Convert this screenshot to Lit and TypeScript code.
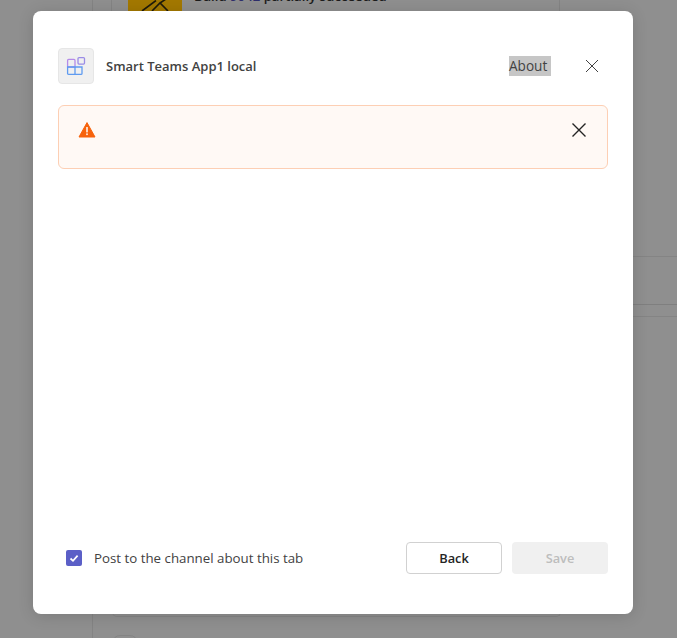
import { LitElement, css, html } from 'lit';
import { customElement } from 'lit/decorators.js';

@customElement('app-root')
export class AppRoot extends LitElement {
  static styles = css`
    :host {
      display: block;
      position: relative;
      width: 677px;
      height: 638px;
      overflow: hidden;
      background: #8f8f8f;
      font-family: 'Open Sans', 'Noto Sans', sans-serif;
      color: #242424;
    }

    /* dimmed page behind the dialog */
    .page {
      display: flex;
      height: 100%;
    }
    .rail {
      width: 92px;
      border-right: 1px solid #848484;
    }
    .feed {
      flex: 1;
      display: flex;
      flex-direction: column;
    }
    .feed > * {
      flex: none;
    }
    .top {
      height: 257px;
      border-bottom: 1px solid #848484;
      box-sizing: border-box;
    }
    .post {
      width: 449px;
      height: 60px;
      margin-left: 18px;
      border-left: 1px solid #848484;
      border-right: 1px solid #848484;
      display: flex;
      gap: 12px;
      padding-left: 16px;
      box-sizing: border-box;
    }
    .thumb {
      width: 54px;
      height: 40px;
      background: #a37800;
    }
    .thumb svg {
      display: block;
    }
    .post-text {
      margin-top: -14px;
      font-size: 13.2px;
      line-height: 20px;
      color: #1c1c1c;
      font-weight: 600;
      white-space: nowrap;
    }
    .post-text span {
      color: #2f2f6b;
    }
    .band {
      height: 48px;
      border-bottom: 1px solid #7f7f7f;
      box-sizing: border-box;
    }
    .gap {
      height: 12px;
      border-bottom: 1px solid #848484;
      box-sizing: border-box;
    }
    .card {
      width: 449px;
      height: 300px;
      margin-left: 19px;
      border: 1px solid #848484;
      border-top: none;
      border-radius: 0 0 5px 5px;
      box-sizing: border-box;
    }
    .avatar {
      width: 26px;
      height: 26px;
      margin: 18px 0 0 19px;
      border: 1px solid #848484;
      border-radius: 8px;
      box-sizing: border-box;
    }

    /* dialog */
    .dialog {
      position: absolute;
      left: 33px;
      top: 11px;
      width: 600px;
      height: 603px;
      box-sizing: border-box;
      padding: 37px 25px 40px;
      background: #fff;
      border-radius: 8px;
      box-shadow: 0 2px 16px rgba(0, 0, 0, 0.14);
      display: flex;
      flex-direction: column;
    }
    .header {
      display: flex;
      align-items: center;
      height: 36px;
    }
    .app-icon {
      width: 36px;
      height: 36px;
      box-sizing: border-box;
      border: 1px solid #e6e6e6;
      border-radius: 4px;
      background: #f0f0f0;
      display: flex;
      align-items: center;
      justify-content: center;
    }
    .app-name {
      margin-left: 12px;
      flex: 1;
      font-size: 13px;
      font-weight: 600;
      color: #424242;
    }
    .about {
      display: block;
      width: 42px;
      height: 20px;
      line-height: 20px;
      background: #c6c6c6;
      color: #424242;
      font-size: 13.6px;
      white-space: nowrap;
    }
    .close {
      display: block;
      margin-left: 34px;
      margin-right: 9px;
    }
    .alert {
      margin-top: 21px;
      height: 64px;
      box-sizing: border-box;
      border: 1px solid #fdcfb4;
      border-radius: 6px;
      background: #fff9f5;
      display: flex;
      justify-content: space-between;
      padding: 15px 21px 0 19px;
    }
    .alert svg {
      display: block;
    }
    .alert .dismiss {
      margin-top: 2px;
    }
    .spacer {
      flex: 1;
    }
    .footer {
      display: flex;
      align-items: center;
      height: 32px;
    }
    .check {
      width: 16px;
      height: 16px;
      margin-left: 8px;
      border-radius: 2px;
      background: #5b5fc7;
      display: flex;
      align-items: center;
      justify-content: center;
    }
    .check-label {
      margin-left: 12px;
      flex: 1;
      font-size: 13.3px;
      color: #424242;
    }
    .btn {
      width: 96px;
      height: 32px;
      box-sizing: border-box;
      border-radius: 4px;
      font: 600 12.8px 'Open Sans', 'Noto Sans', sans-serif;
      padding: 0;
    }
    .back {
      background: #fff;
      border: 1px solid #d1d1d1;
      color: #242424;
      margin-right: 10px;
    }
    .save {
      background: #f0f0f0;
      border: none;
      color: #bdbdbd;
    }
  `;

  render() {
    return html`
      <div class="page">
        <div class="rail"></div>
        <div class="feed">
          <div class="top">
            <div class="post">
              <div class="thumb">
                <svg width="54" height="11" viewBox="0 0 54 11" fill="none" stroke="#1f1a0a" stroke-width="1.6">
                  <path d="M14 11 L28 0.5 M24 11 L32 3 L40 11 M32 3 L38 -1" />
                </svg>
              </div>
              <div class="post-text">Build <span>9042</span> partially succeeded</div>
            </div>
          </div>
          <div class="band"></div>
          <div class="gap"></div>
          <div class="card"></div>
          <div class="avatar"></div>
        </div>
      </div>

      <div class="dialog">
        <div class="header">
          <div class="app-icon">
            <svg width="20" height="20" viewBox="0 0 20 20" fill="none" stroke-width="1.3">
              <path d="M9 11 V4.4 A1 1 0 0 0 8 3.4 H2.6 A1 1 0 0 0 1.6 4.4 V11 Z" stroke="#b58be8" />
              <path d="M1.6 11 H16 V17.4 A1 1 0 0 1 15 18.4 H2.6 A1 1 0 0 1 1.6 17.4 Z M9 11 V18.4" stroke="#5f9bf0" />
              <rect x="12" y="1.6" width="6.5" height="6.5" rx="1" stroke="#9a8ce6" />
            </svg>
          </div>
          <div class="app-name">Smart Teams App1 local</div>
          <div class="about">About</div>
          <svg class="close" width="14" height="14" viewBox="0 0 14 14" stroke="#424242" stroke-width="1">
            <path d="M1 1 L13 13 M13 1 L1 13" />
          </svg>
        </div>

        <div class="alert">
          <svg width="18" height="18" viewBox="0 0 18 18">
            <path d="M9 1.6 L17 16 H1 Z" fill="#f7630c" stroke="#f7630c" stroke-width="1" stroke-linejoin="round" />
            <rect x="8.2" y="6" width="1.6" height="5.4" fill="#fff3ea" />
            <rect x="8.2" y="12.4" width="1.6" height="1.7" fill="#fff3ea" />
          </svg>
          <svg class="dismiss" width="14" height="14" viewBox="0 0 14 14" stroke="#242424" stroke-width="1.4">
            <path d="M0.5 0.5 L13.5 13.5 M13.5 0.5 L0.5 13.5" />
          </svg>
        </div>

        <div class="spacer"></div>

        <div class="footer">
          <div class="check">
            <svg width="10" height="10" viewBox="0 0 10 10" fill="none" stroke="#fff" stroke-width="1.7">
              <path d="M1.5 5.5 L4 7.8 L8.6 2.6" />
            </svg>
          </div>
          <div class="check-label">Post to the channel about this tab</div>
          <button class="btn back">Back</button>
          <button class="btn save">Save</button>
        </div>
      </div>
    `;
  }
}
